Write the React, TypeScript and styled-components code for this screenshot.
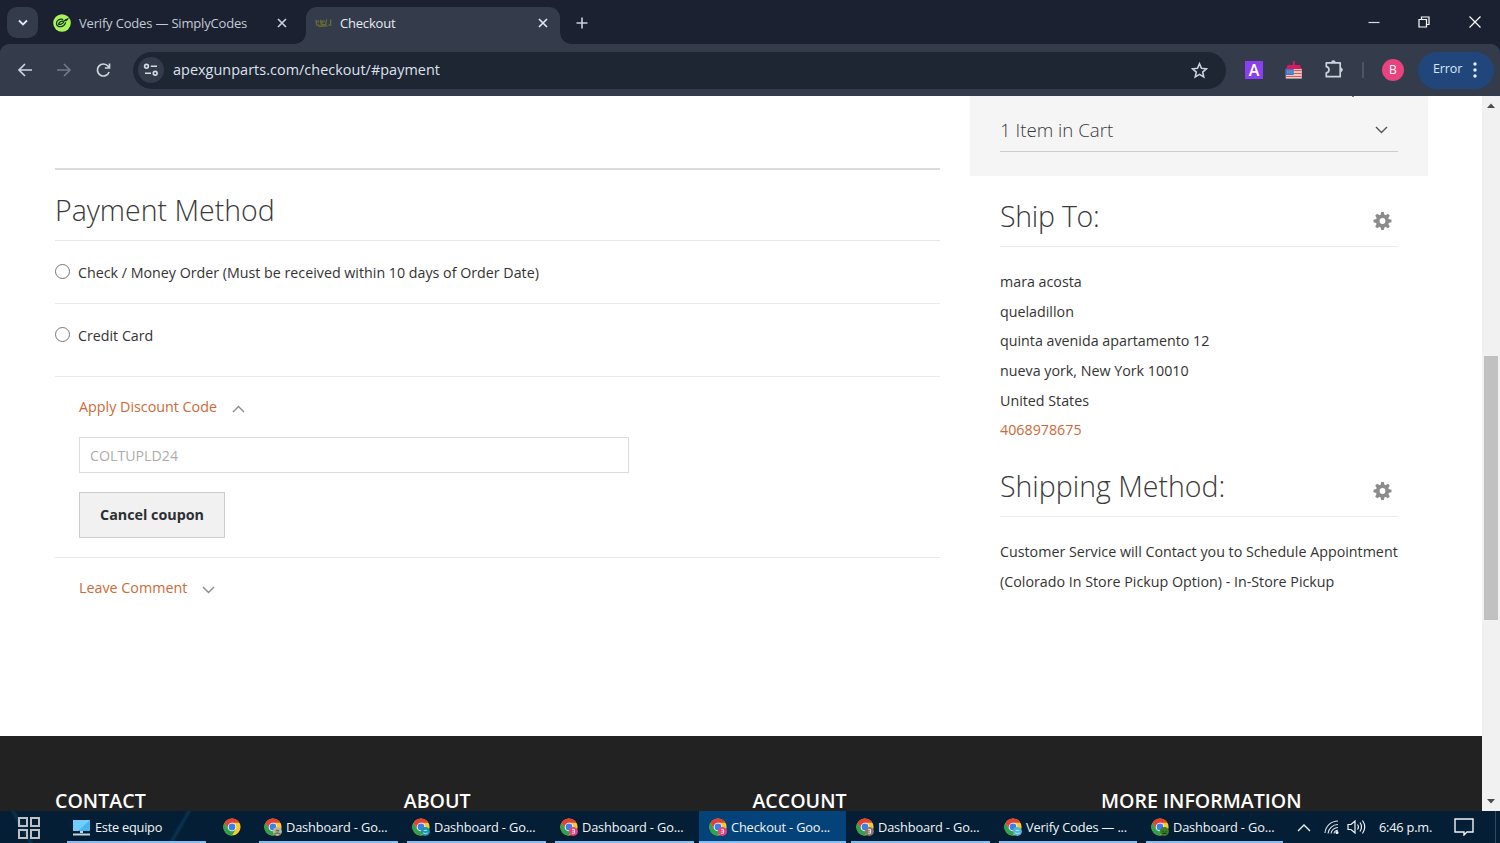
import React from "react";
import styled, { createGlobalStyle } from "styled-components";

const Global = createGlobalStyle`
  * { box-sizing: border-box; }
  body { margin: 0; background: #fff; overflow: hidden; font-family: "Open Sans", "Noto Sans", sans-serif; }
  svg { display: block; flex: none; }
`;

const Screen = styled.div`
  width: 1500px;
  height: 843px;
  display: flex;
  flex-direction: column;
  overflow: hidden;
`;

/* ---------- browser frame ---------- */

const TabStrip = styled.header`
  height: 44px;
  background: #1b2130;
  display: flex;
  align-items: stretch;
  padding-left: 7px;
`;
const TabSearch = styled.button`
  width: 31px;
  height: 31px;
  margin-top: 7px;
  border: 0;
  padding: 0;
  border-radius: 10px;
  background: #343c4b;
  display: grid;
  place-items: center;
`;
const Tab = styled.div<{ $active?: boolean; $width: number }>`
  position: relative;
  width: ${(p) => p.$width}px;
  margin-top: 7px;
  padding: ${(p) => (p.$active ? "0 12px 6px 9px" : "0 19px 6px 15px")};
  display: flex;
  align-items: center;
  gap: 8px;
  border-radius: 11px 11px 0 0;
  background: ${(p) => (p.$active ? "#343c4b" : "transparent")};
  &::before, &::after {
    content: "";
    display: ${(p) => (p.$active ? "block" : "none")};
    position: absolute;
    bottom: 0;
    width: 11px;
    height: 11px;
  }
  &::before { left: -11px; background: radial-gradient(circle at 0 0, transparent 10.5px, #343c4b 11px); }
  &::after { right: -11px; background: radial-gradient(circle at 100% 0, transparent 10.5px, #343c4b 11px); }
`;
const TabTitle = styled.span<{ $bright?: boolean; $spacing: number }>`
  flex: 1;
  white-space: nowrap;
  font: 400 13px/20px "Open Sans", sans-serif;
  letter-spacing: ${(p) => p.$spacing}px;
  color: ${(p) => (p.$bright ? "#e6eaf2" : "#c3cad6")};
`;
const NewTab = styled.div`
  width: 44px;
  margin-top: 1px;
  display: grid;
  place-items: center;
`;
const WindowButtons = styled.div`
  margin-left: auto;
  width: 151px;
  display: flex;
  align-items: center;
  justify-content: space-around;
`;
const ToolbarBack = styled.div`
  background: #1b2130;
`;
const Toolbar = styled.div`
  height: 52px;
  background: #343c4b;
  border-radius: 9px 9px 0 0;
  display: flex;
  align-items: center;
  padding: 0 6px 0 16px;
`;
const NavIcons = styled.div`
  display: flex;
  gap: 21px;
  width: 117px;
`;
const Address = styled.div`
  width: 1093px;
  height: 37px;
  border-radius: 19px;
  background: #1e2533;
  display: flex;
  align-items: center;
  padding: 0 18px 0 5px;
`;
const SiteInfo = styled.span`
  width: 26px;
  height: 26px;
  border-radius: 50%;
  background: #343c4b;
  display: grid;
  place-items: center;
  margin-right: 9px;
`;
const Url = styled.span`
  flex: 1;
  font: 400 14.4px/20px "Open Sans", sans-serif;
  letter-spacing: 0.05px;
  color: #dde2ec;
`;
const Extensions = styled.div`
  display: flex;
  align-items: center;
  margin-left: 19px;
  gap: 20px;
`;
const Purple = styled.span`
  width: 18px;
  height: 18px;
  background: #8a3ff0;
  color: #fff;
  font: 600 16px/18px "Open Sans", sans-serif;
  text-align: center;
`;
const Divider = styled.span`
  width: 2px;
  height: 16px;
  margin-left: -1px;
  background: #4c5668;
`;
const Avatar = styled.span`
  width: 22px;
  height: 22px;
  border-radius: 50%;
  background: #e8437c;
  color: #fff;
  font: 500 12px/22px "Open Sans", sans-serif;
  text-align: center;
  margin-left: -2px;
`;
const ErrorChip = styled.span`
  width: 76px;
  height: 37px;
  margin-left: auto;
  border-radius: 19px;
  background: #20467c;
  color: #dbe6fa;
  font: 400 12.5px/20px "Open Sans", sans-serif;
  letter-spacing: -0.1px;
  display: flex;
  align-items: center;
  justify-content: space-between;
  padding: 0 17px 0 15px;
`;
const ErrorLabel = styled.span`
  padding-bottom: 2px;
`;

/* ---------- checkout page ---------- */

const Viewport = styled.div`
  height: 715px;
  display: flex;
`;
const Page = styled.div`
  width: 1482px;
  display: flex;
  flex-direction: column;
`;
const Columns = styled.main`
  height: 640px;
  display: flex;
  padding: 0 54px 0 55px;
`;
const Payment = styled.section`
  width: 885px;
  padding-top: 72px;
`;
const PaymentHeader = styled.div`
  height: 73px;
  border-top: 2px solid #dbdbdb;
  border-bottom: 1px solid #e6e6e6;
  padding-top: 21px;
`;
const Heading = styled.h2<{ $spacing?: number }>`
  margin: 0;
  font: 300 28.5px/38px "Open Sans", sans-serif;
  letter-spacing: ${(p) => p.$spacing ?? 0}px;
  color: #3a3a3a;
  white-space: nowrap;
`;
const Method = styled.label<{ $height: number }>`
  height: ${(p) => p.$height}px;
  border-bottom: 1px solid #eaeaea;
  display: flex;
  align-items: flex-start;
  gap: 8px;
  padding-top: 22px;
  font: 400 14.25px/20px "Open Sans", sans-serif;
  color: #333;
`;
const Radio = styled.input`
  appearance: none;
  width: 15px;
  height: 15px;
  margin: 1px 0 0;
  border: 1px solid #767676;
  border-radius: 50%;
  background: #fff;
`;
const Option = styled.div<{ $height: number; $last?: boolean }>`
  height: ${(p) => p.$height}px;
  border-bottom: ${(p) => (p.$last ? "0" : "1px solid #eaeaea")};
  padding: 20px 0 0 24px;
`;
const Toggle = styled.div`
  display: flex;
  align-items: center;
  gap: 15px;
  font: 400 14.3px/20px "Open Sans", sans-serif;
  color: #cd6a38;
  svg { margin-top: 3px; }
`;
const CouponField = styled.input`
  display: block;
  width: 550px;
  height: 36px;
  margin: 20px 0 19px;
  border: 1px solid #dcdcdc;
  padding: 1px 10px 0;
  background: #fff;
  color: #adadad;
  font: 400 14.2px/20px "Open Sans", sans-serif;
`;
const CancelButton = styled.button`
  width: 146px;
  height: 46px;
  border: 1px solid #cdcdcd;
  background: #f1f1f1;
  color: #2b2f33;
  padding: 0 0 1px;
  font: 700 14.3px/20px "Open Sans", sans-serif;
  white-space: nowrap;
`;
const Sidebar = styled.aside`
  width: 458px;
  margin-left: 30px;
`;
const Summary = styled.div`
  position: relative;
  height: 80px;
  background: #f5f5f5;
  padding: 0 30px;
`;
const ClippedMark = styled.i`
  position: absolute;
  left: 382px;
  top: 0;
  width: 2px;
  height: 1px;
  background: #777;
`;
const CartRow = styled.div`
  width: 398px;
  height: 56px;
  border-bottom: 1px solid #ccc;
  display: flex;
  align-items: center;
  justify-content: space-between;
  padding: 13px 10px 0 0;
  font: 300 18.7px/24px "Open Sans", sans-serif;
  color: #3a3a3a;
`;
const Info = styled.section`
  margin-left: 30px;
  width: 398px;
  font: 400 14.27px/29.7px "Open Sans", sans-serif;
  color: #333;
`;
const InfoHead = styled.div<{ $height: number }>`
  height: ${(p) => p.$height}px;
  border-bottom: 1px solid #ebebeb;
  display: flex;
  justify-content: space-between;
  align-items: flex-end;
  padding: 0 6px 11px 0;
  svg { margin-bottom: 5px; }
`;
const InfoBody = styled.div<{ $lines: number }>`
  height: ${(p) => p.$lines * 29.7 + 19.8}px;
  padding-top: 19.8px;
  white-space: nowrap;
`;
const Phone = styled.div`
  color: #cd6a38;
`;
const Footer = styled.footer`
  height: 75px;
  background: #222;
  padding: 55px 0 0 55px;
  display: grid;
  grid-template-columns: repeat(4, 348.7px);
`;
const FooterTitle = styled.h4`
  margin: 0;
  font: 600 19.6px/20px "Open Sans", sans-serif;
  color: #fff;
  white-space: nowrap;
`;
const Scrollbar = styled.div`
  width: 18px;
  background: #f1f1f1;
  display: flex;
  flex-direction: column;
  align-items: center;
  justify-content: space-between;
  padding: 7px 0;
`;
const Track = styled.div`
  height: 681px;
  padding-top: 243px;
`;
const Thumb = styled.div`
  width: 14px;
  height: 264px;
  background: #c1c1c1;
`;

/* ---------- taskbar ---------- */

const Taskbar = styled.footer`
  height: 32px;
  background:
    linear-gradient(120deg, transparent 44%, #0b3450 50%, transparent 56%) 160px 0 / 40px 32px no-repeat,
    linear-gradient(60deg, transparent 44%, #0b3450 50%, transparent 56%) 2px 0 / 40px 32px no-repeat,
    #031e35;
  display: flex;
  align-items: stretch;
  color: #f2f5f8;
`;
const StartCell = styled.div`
  width: 67px;
  padding: 6px 0 0 18px;
`;
const Task = styled.div<{ $active?: boolean; $width: number; $gap: number; $spacing?: number; $open?: boolean }>`
  width: ${(p) => p.$width}px;
  margin-right: ${(p) => p.$gap}px;
  display: flex;
  align-items: center;
  gap: 4px;
  padding: ${(p) => (p.$open === false ? "0" : "2px")} 0 0 ${(p) => (p.$active ? 10 : 5)}px;
  background: ${(p) => (p.$active ? "#04437a" : "transparent")};
  border-bottom: ${(p) => (p.$open === false ? "0" : "2px solid #86bdf0")};
  font: 400 12.8px/20px "Open Sans", sans-serif;
  letter-spacing: ${(p) => p.$spacing ?? -0.15}px;
  white-space: nowrap;
`;
const Tray = styled.div`
  margin-left: auto;
  width: 204px;
  padding: 0 21px 0 5px;
  display: flex;
  align-items: center;
  justify-content: space-between;
  border-right: 1px solid #31485b;
  margin-right: 4px;
`;
const TrayIcons = styled.div`
  display: flex;
  align-items: center;
  width: 70px;
  justify-content: space-between;
`;
const Signals = styled.div`
  display: flex;
  align-items: center;
  gap: 7px;
`;
const Clock = styled.span`
  margin-left: -10px;
  font: 400 12.8px/20px "Open Sans", sans-serif;
  letter-spacing: -0.2px;
  white-space: nowrap;
`;

/* ---------- icons ---------- */

type StrokeProps = { w: number; h?: number; d: string; color: string; sw?: number };
const Stroke = ({ w, h = w, d, color, sw = 1.5 }: StrokeProps) => (
  <svg width={w} height={h} viewBox={`0 0 ${w} ${h}`} fill="none" stroke={color} strokeWidth={sw}>
    <path d={d} />
  </svg>
);

const Gear = () => (
  <svg width="19" height="18" viewBox="-9.5 -9 19 18">
    <g fill="#8c8c8c">
      {[0, 45, 90, 135].map((a) => (
        <path key={a} transform={`rotate(${a})`} d="M-2-6-1.3-9H1.3L2-6V6L1.3 9H-1.3L-2 6Z" />
      ))}
      <circle r="6.6" />
    </g>
    <circle r="2.9" fill="#fff" />
  </svg>
);

const ChromeLogo = ({ badge, face = "none" }: { badge?: string; face?: string }) => (
  <svg width="18" height="18" viewBox="0 0 18 18">
    <circle cx="9" cy="9" r="8.6" fill="#fbc928" />
    <path d="M1.55 4.7A8.6 8.6 0 0 1 16.45 4.7H9L5.3 11.15Z" fill="#e34133" />
    <path d="M1.55 4.7A8.6 8.6 0 0 0 9 17.6L12.7 11.15H5.3Z" fill="#2fa14f" />
    <circle cx="9" cy="9" r="4.3" fill="#fff" />
    <circle cx="9" cy="9" r="3.4" fill="#3d7fea" />
    {badge && <circle cx="13.4" cy="13.4" r="4.5" fill={badge} />}
    {face === "person" && <path d="M10.2 16.5q3.2-3 6.5 0M11.8 12.6h3.4" stroke="#68705a" strokeWidth="1.6" fill="none" />}
    {face === "mark" && <path d="M12.2 11.4h2.3v3.8h-2.6m.5-2h2" stroke="#ffe2ed" strokeWidth=".9" fill="none" />}
    {face === "dots" && <path d="M11.4 13.2h1.2m1.8 0h1.2M11.5 15.4h4" stroke="#173e1a" strokeWidth="1.1" fill="none" />}
    {face === "wave" && <path d="M11 14.8q2.4 1.8 4.8 0M11.6 12.4h3.6" stroke="#bdeaf4" strokeWidth=".9" fill="none" />}
  </svg>
);

const tasks = [
  { title: "Dashboard - Go...", width: 139, gap: 9, badge: "#b8b69b", face: "person" },
  { title: "Dashboard - Go...", width: 139, gap: 9, badge: "#1697a8", face: "wave" },
  { title: "Dashboard - Go...", width: 139, gap: 5, badge: "#e8437c", face: "mark" },
  { title: "Checkout - Goo...", width: 147, gap: 5, badge: "#e8437c", face: "mark", active: true },
  { title: "Dashboard - Go...", width: 139, gap: 9, badge: "#857873", face: "mark" },
  { title: "Verify Codes — ...", width: 138, gap: 9, badge: "#54b5d1", face: "wave" },
  { title: "Dashboard - Go...", width: 137, gap: 0, badge: "#3f7d27", face: "dots" },
];

const address = ["mara acosta", "queladillon", "quinta avenida apartamento 12", "nueva york, New York 10010", "United States"];

export default function App() {
  return (
    <Screen>
      <Global />
      <TabStrip>
        <TabSearch>
          <Stroke w={10} h={8} d="M1 1.5 5 5.5 9 1.5" color="#e2e7ef" sw={1.9} />
        </TabSearch>
        <Tab $width={268}>
          <svg width="18" height="18" viewBox="0 0 19 19">
            <circle cx="9.5" cy="9.5" r="9.3" fill="#a7f45c" />
            <path d="M10.8 5.8C6.5 4.6 3.6 7.3 3.7 10.2c.1 2.9 3 3.7 5.6 2.8 2.2-.8 3.9-2.6 3.9-4.4M5.8 10.8c1.5.8 5-.6 5.4-2.4.3-1.4-2.2-1.2-3.6-.2-.9.7-1.5 1.7-1.8 2.6ZM10.8 8.4C12 7.4 12 6 15.6 5c-.5 1.3-1.6 1.9-2.4 2.4" fill="none" stroke="#16351f" strokeWidth="1.3" />
          </svg>
          <TabTitle $spacing={-0.18}>Verify Codes — SimplyCodes</TabTitle>
          <Stroke w={10} d="M1 1 9 9M9 1 1 9" color="#c9d0db" sw={1.7} />
        </Tab>
        <Tab $active $width={254}>
          <svg width="17" height="12" viewBox="0 0 19 12">
            <path d="M1 2.5 2 8.5H5M3.5 3v3M6 2.5 7 8l5-.5L13 2M8 3v3.5M10 2.8v3M15 8.3h2.5V2.2M4 9.8l10-.6" fill="none" stroke="#6a6c35" strokeWidth="1.4" />
          </svg>
          <TabTitle $bright $spacing={-0.2}>Checkout</TabTitle>
          <Stroke w={10} d="M1 1 9 9M9 1 1 9" color="#e2e7ef" sw={1.7} />
        </Tab>
        <NewTab>
          <Stroke w={12} d="M6 .5V11.5M.5 6H11.5" color="#c9d0db" sw={1.6} />
        </NewTab>
        <WindowButtons>
          <Stroke w={12} d="M.5 6.5H11.5" color="#d5dae2" sw={1.2} />
          <Stroke w={12} d="M1 3.5H8.5V11H1ZM3.5 3.5V1H11V8.5H8.5" color="#fff" sw={1.2} />
          <Stroke w={12} d="M.5.5 11.5 11.5M11.5.5.5 11.5" color="#fff" sw={1.2} />
        </WindowButtons>
      </TabStrip>

      <ToolbarBack>
        <Toolbar>
          <NavIcons>
            <Stroke w={18} d="M16 9H3M9 3 3 9 9 15" color="#ccd3de" sw={1.7} />
            <Stroke w={18} d="M2 9H15M9 3 15 9 9 15" color="#707988" sw={1.7} />
            <svg width="18" height="18" viewBox="-.5 0 18 18" fill="none" stroke="#ccd3de" strokeWidth="1.7">
              <path d="M14.6 11A6 6 0 1 1 13.6 5.2L15 6.7" />
              <path d="M15 2.4V7H10.4" />
            </svg>
          </NavIcons>
          <Address>
            <SiteInfo>
              <svg width="16" height="14" viewBox="0 0 16 14" fill="none" stroke="#d6dce6" strokeWidth="1.6">
                <circle cx="3.5" cy="3.3" r="1.9" />
                <path d="M7.8 3.3H14M2 10.3H8" />
                <circle cx="12.2" cy="10.3" r="1.9" />
              </svg>
            </SiteInfo>
            <Url>apexgunparts.com/checkout/#payment</Url>
            <svg width="17" height="17" viewBox="0 0 18 18" fill="none" stroke="#ccd3de" strokeWidth="1.7">
              <path d="m9 1.9 2.1 4.8 5.2.5-3.9 3.5 1.1 5.1L9 13.1l-4.5 2.7 1.1-5.1-3.9-3.5 5.2-.5Z" />
            </svg>
          </Address>
          <Extensions>
            <Purple>A</Purple>
            <svg width="20" height="20" viewBox="-.8 0 20 20">
              <path d="M9 1h2v4h5l2 4H2l2-4h5Z" fill="#d81b60" />
              <path d="M2 9h16v9.5H2Z" fill="#f4eeee" />
              <path d="M10 10.5h8M10 13.5h8M2 16.5h16" stroke="#e2574c" strokeWidth="1.4" />
              <path d="M2 9h8v6H2Z" fill="#3b76c4" />
              <path d="M3.5 11h5m-5 2h5" stroke="#b9d3f2" strokeWidth=".8" strokeDasharray="1 1" />
            </svg>
            <svg width="20" height="20" viewBox="-1 .5 20 20" fill="none" stroke="#ccd3de" strokeWidth="1.7" strokeLinejoin="round">
              <path d="M2.3 3.3H16.2V17.2H2.3V13.4Q5 13 5 10.3T2.3 7.2Z" />
              <path d="M7.4 3A2 2 0 0 1 11.4 3ZM16.5 8.3A2 2 0 0 1 16.5 12.3Z" fill="#ccd3de" strokeWidth=".6" />
            </svg>
            <Divider />
            <Avatar>B</Avatar>
          </Extensions>
          <ErrorChip>
            <ErrorLabel>Error</ErrorLabel>
            <svg width="4" height="16" viewBox="0 0 4 16" fill="#e8f0ff">
              <circle cx="2" cy="2" r="1.7" />
              <circle cx="2" cy="8" r="1.7" />
              <circle cx="2" cy="14" r="1.7" />
            </svg>
          </ErrorChip>
        </Toolbar>
      </ToolbarBack>

      <Viewport>
        <Page>
          <Columns>
            <Payment>
              <PaymentHeader>
                <Heading>Payment Method</Heading>
              </PaymentHeader>
              <Method $height={63}>
                <Radio type="radio" name="method" />
                Check / Money Order (Must be received within 10 days of Order Date)
              </Method>
              <Method $height={73}>
                <Radio type="radio" name="method" />
                Credit Card
              </Method>
              <Option $height={181}>
                <Toggle>
                  Apply Discount Code
                  <Stroke w={13} h={8} d="M1 7 6.5 1.5 12 7" color="#8a8a8a" sw={1.4} />
                </Toggle>
                <CouponField defaultValue="COLTUPLD24" />
                <CancelButton>Cancel coupon</CancelButton>
              </Option>
              <Option $height={60} $last>
                <Toggle>
                  Leave Comment
                  <Stroke w={13} h={8} d="M1 1 6.5 6.5 12 1" color="#8a8a8a" sw={1.4} />
                </Toggle>
              </Option>
            </Payment>
            <Sidebar>
              <Summary>
                <ClippedMark />
                <CartRow>
                  1 Item in Cart
                  <Stroke w={13} h={8} d="M1 1 6.5 6.5 12 1" color="#555" sw={1.4} />
                </CartRow>
              </Summary>
              <Info>
                <InfoHead $height={71}>
                  <Heading $spacing={-0.25}>Ship To:</Heading>
                  <Gear />
                </InfoHead>
                <InfoBody $lines={6}>
                  {address.map((line) => (
                    <div key={line}>{line}</div>
                  ))}
                  <Phone>4068978675</Phone>
                </InfoBody>
              </Info>
              <Info>
                <InfoHead $height={72}>
                  <Heading>Shipping Method:</Heading>
                  <Gear />
                </InfoHead>
                <InfoBody $lines={2}>
                  Customer Service will Contact you to Schedule Appointment
                  <br />
                  (Colorado In Store Pickup Option) - In-Store Pickup
                </InfoBody>
              </Info>
            </Sidebar>
          </Columns>
          <Footer>
            <FooterTitle>CONTACT</FooterTitle>
            <FooterTitle>ABOUT</FooterTitle>
            <FooterTitle>ACCOUNT</FooterTitle>
            <FooterTitle>MORE INFORMATION</FooterTitle>
          </Footer>
        </Page>
        <Scrollbar>
          <svg width="8" height="5" viewBox="0 0 8 5"><path d="M0 5 4 .5 8 5Z" fill="#4c4c4c" /></svg>
          <Track>
            <Thumb />
          </Track>
          <svg width="8" height="5" viewBox="0 0 8 5"><path d="M0 0 4 4.5 8 0Z" fill="#4c4c4c" /></svg>
        </Scrollbar>
      </Viewport>

      <Taskbar>
        <StartCell>
          <svg width="22" height="22" viewBox="0 0 22 22" fill="none" stroke="#bfc1c2" strokeWidth="2">
            <path d="M1 1H9V9H1ZM13 1H21V9H13ZM1 13H9V21H1ZM13 13H21V21H13Z" />
          </svg>
        </StartCell>
        <Task $width={139} $gap={12} $spacing={-0.25}>
          <svg width="19" height="17" viewBox="0 0 19 17">
            <path d="M1 1H18V12H1Z" fill="#46b5f0" />
            <path d="M1 1H18L6 12H1Z" fill="#72cdfa" />
            <path d="M8 12h3v2H8ZM1 14.5h17V16.5H1Z" fill="#bed6e4" />
          </svg>
          Este equipo
        </Task>
        <Task $width={41} $gap={0} $open={false}>
          <ChromeLogo />
        </Task>
        {tasks.map((t, i) => (
          <Task key={i} $width={t.width} $gap={t.gap} $active={t.active}>
            <ChromeLogo badge={t.badge} face={t.face} />
            {t.title}
          </Task>
        ))}
        <Tray>
          <TrayIcons>
            <Stroke w={14} h={9} d="M1 8 7 2 13 8" color="#f2f5f8" sw={1.4} />
            <Signals>
              <svg width="16" height="16" viewBox="0 0 16 16" fill="none" stroke="#dfe6ec" strokeWidth="1.1">
                <path d="M1 14A13 13 0 0 1 14 2M4 14.5A10 10 0 0 1 14 5.5M7 14.5A7 7 0 0 1 14 8.5M10 14.5A4 4 0 0 1 14 11.3" />
                <circle cx="13" cy="13.5" r="1.5" fill="#fff" stroke="none" />
              </svg>
              <svg width="20" height="16" viewBox="0 0 20 16" fill="none" stroke="#f2f5f8" strokeWidth="1.2">
                <path d="M1 5.5H4L8 2V14L4 10.5H1ZM10.5 5.5Q12.3 8 10.5 10.5M13 3.5Q16 8 13 12.5M15.5 1.5Q20 8 15.5 14.5" />
              </svg>
            </Signals>
          </TrayIcons>
          <Clock>6:46 p.m.</Clock>
          <Stroke w={20} h={18} d="M1 1H19V14H13L10 17V14H1Z" color="#f2f5f8" sw={1.4} />
        </Tray>
      </Taskbar>
    </Screen>
  );
}
